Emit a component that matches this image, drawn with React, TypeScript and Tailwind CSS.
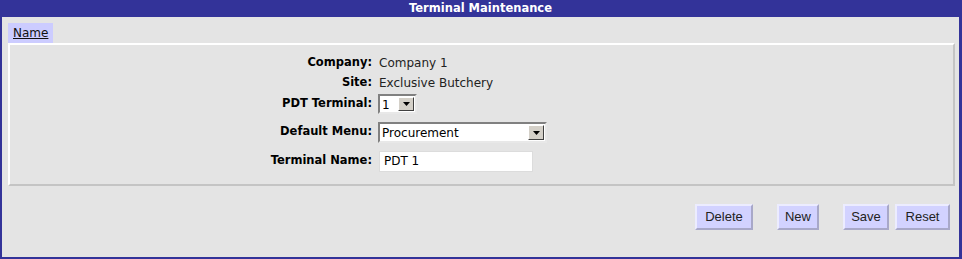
import React from 'react'

const label = "font-['DejaVu_Sans',sans-serif] text-[11.5px] font-bold text-black text-right w-[362px] shrink-0"
const value = "font-['DejaVu_Sans',sans-serif] text-[12px] text-[#222]"

function Arrow(){
  return (
    <div className="w-[16px] h-full bg-[#d4d0c8] border border-t-white border-l-white border-b-[#404040] border-r-[#404040] flex items-center justify-center">
      <svg width="7" height="4" viewBox="0 0 7 4"><path d="M0 0h7L3.5 4z" fill="#000"/></svg>
    </div>
  )
}

function FakeSelect({ text, w }: { text: string; w: string }){
  return (
    <div className={`${w} h-full bg-white border-2 border-t-[#808080] border-l-[#808080] border-b-[#e8e8e8] border-r-[#e8e8e8] flex items-stretch p-[1px]`}>
      <div className={`${value} flex-1 pl-[1px] leading-[16px] text-black`}>{text}</div>
      <Arrow/>
    </div>
  )
}

function Button({ children, w }: { children: React.ReactNode; w: string }){
  return (
    <button className={`${w} h-[26px] bg-[#d2d2ff] border-2 border-t-[#ececff] border-l-[#ececff] border-b-[#a8a8c8] border-r-[#a8a8c8] font-['Liberation_Sans',sans-serif] text-[13px] text-[#222]`}>
      {children}
    </button>
  )
}

export default function App(){
  return (
    <div className="w-[962px] h-[259px] bg-[#e4e4e4] border-l-2 border-r-[3px] border-b-2 border-[#333399] flex flex-col">
      <div className="h-[17px] bg-[#333399] text-white text-center font-['DejaVu_Sans',sans-serif] text-[11.5px] font-bold leading-[17px]">Terminal Maintenance</div>
      <div className="px-[6px] pt-[6px] pr-[4px]">
        <div className="flex">
          <div className="h-[20px] px-[5px] bg-[#ccccff] font-['DejaVu_Sans',sans-serif] text-[12px] underline leading-[20px] text-[#111]">Name</div>
        </div>
        <div className="h-[143px] border-2 border-t-white border-l-white border-b-[#c4c4c4] border-r-[#c4c4c4] pt-[8px] flex flex-col">
          <div className="flex items-center h-[20px] gap-[7px]">
            <div className={label}>Company:</div>
            <div className={value}>Company 1</div>
          </div>
          <div className="flex items-center h-[20px] gap-[7px]">
            <div className={label}>Site:</div>
            <div className={value}>Exclusive Butchery</div>
          </div>
          <div className="flex items-start h-[20px] gap-[6px] mt-[1px]">
            <div className={`${label} pt-[1px]`}>PDT Terminal:</div>
            <FakeSelect text="1" w="w-[39px]"/>
          </div>
          <div className="flex items-start h-[21px] gap-[6px] mt-[8px]">
            <div className={`${label} pt-[1px]`}>Default Menu:</div>
            <FakeSelect text="Procurement" w="w-[169px]"/>
          </div>
          <div className="flex items-start h-[21px] gap-[7px] mt-[8px]">
            <div className={`${label} pt-[1px]`}>Terminal Name:</div>
            <div className={`${value} w-[154px] h-full bg-white border border-[#dcdcdc] leading-[19px] pl-[4px] text-black`}>PDT 1</div>
          </div>
        </div>
        <div className="flex justify-end mt-[18px] pr-[5px]">
          <Button w="w-[58px]">Delete</Button>
          <div className="w-[24px]"/>
          <Button w="w-[42px]">New</Button>
          <div className="w-[24px]"/>
          <Button w="w-[46px]">Save</Button>
          <div className="w-[6px]"/>
          <Button w="w-[55px]">Reset</Button>
        </div>
      </div>
    </div>
  )
}
